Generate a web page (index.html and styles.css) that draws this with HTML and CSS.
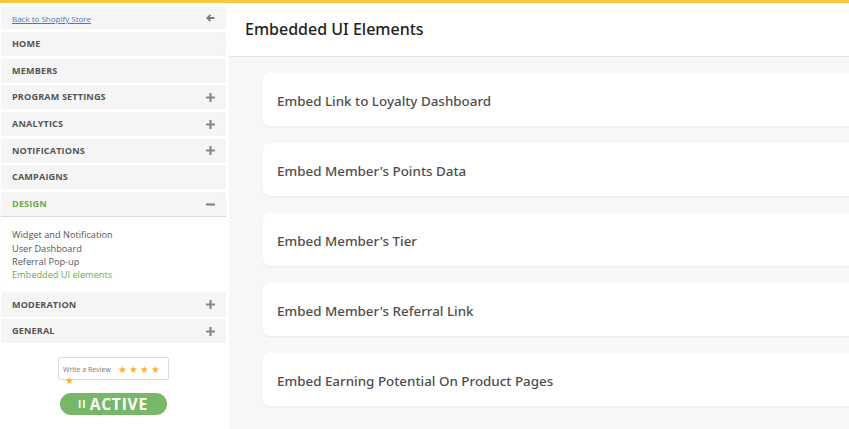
FILE: index.html
```html
<!DOCTYPE html>
<html>
<head>
<meta charset="utf-8">
<link rel="stylesheet" href="styles.css">
</head>
<body>
<div class="topbar"></div>
<div class="app">
  <aside class="sidebar">
    <div class="nav-item back">
      <a href="#" class="back-link">Back to Shopify Store</a>
      <svg class="ico" width="9" height="8" viewBox="0 0 9 8"><path d="M4.5 0.8 L1.3 4 L4.5 7.2 M1.5 4 H8.5" stroke="#7a7a7a" stroke-width="1.8" fill="none"/></svg>
    </div>
    <div class="nav-item"><span>HOME</span></div>
    <div class="nav-item"><span>MEMBERS</span></div>
    <div class="nav-item"><span>PROGRAM SETTINGS</span><svg class="ico" width="9" height="9" viewBox="0 0 9 9"><path d="M4.5 0 V9 M0 4.5 H9" stroke="#888" stroke-width="2.2"/></svg></div>
    <div class="nav-item"><span>ANALYTICS</span><svg class="ico" width="9" height="9" viewBox="0 0 9 9"><path d="M4.5 0 V9 M0 4.5 H9" stroke="#888" stroke-width="2.2"/></svg></div>
    <div class="nav-item"><span>NOTIFICATIONS</span><svg class="ico" width="9" height="9" viewBox="0 0 9 9"><path d="M4.5 0 V9 M0 4.5 H9" stroke="#888" stroke-width="2.2"/></svg></div>
    <div class="nav-item"><span>CAMPAIGNS</span></div>
    <div class="nav-group">
      <div class="nav-item active"><span>DESIGN</span><svg class="ico" width="9" height="9" viewBox="0 0 9 9"><path d="M0 4.5 H9" stroke="#888" stroke-width="2.2"/></svg></div>
      <ul class="submenu">
        <li>Widget and Notification</li>
        <li>User Dashboard</li>
        <li>Referral Pop-up</li>
        <li class="current">Embedded UI elements</li>
      </ul>
    </div>
    <div class="nav-item"><span>MODERATION</span><svg class="ico" width="9" height="9" viewBox="0 0 9 9"><path d="M4.5 0 V9 M0 4.5 H9" stroke="#888" stroke-width="2.2"/></svg></div>
    <div class="nav-item"><span>GENERAL</span><svg class="ico" width="9" height="9" viewBox="0 0 9 9"><path d="M4.5 0 V9 M0 4.5 H9" stroke="#888" stroke-width="2.2"/></svg></div>
    <div class="extras">
      <div class="review">
        <span class="review-text">Write a Review</span>
        <span class="stars">★ ★ ★ ★ <span class="wrap-star">★</span></span>
      </div>
      <div class="status"><span class="pause">II</span> ACTIVE</div>
    </div>
  </aside>
  <main class="main">
    <header class="page-header"><h1>Embedded UI Elements</h1></header>
    <section class="content">
      <div class="card">Embed Link to Loyalty Dashboard</div>
      <div class="card">Embed Member's Points Data</div>
      <div class="card">Embed Member's Tier</div>
      <div class="card">Embed Member's Referral Link</div>
      <div class="card">Embed Earning Potential On Product Pages</div>
    </section>
  </main>
</div>
</body>
</html>
```

FILE: styles.css
```css
* { box-sizing: border-box; }
html, body { margin: 0; padding: 0; }
body {
  width: 849px;
  height: 429px;
  overflow: hidden;
  background: #fff;
  font-family: "Open Sans", "Noto Sans", sans-serif;
}
.topbar { height: 3px; background: #fcc73a; }
.app { display: flex; height: 426px; }
.sidebar {
  width: 229px;
  flex: none;
  padding: 4px 3px 0 1px;
  background: #fff;
}
.nav-item {
  height: 24px;
  margin-bottom: 2.7px;
  background: #f5f5f5;
  border-radius: 3px;
  display: flex;
  align-items: center;
  justify-content: space-between;
  padding: 0 11px 0 11px;
  font-size: 9.1px;
  font-weight: 700;
  color: #555;
  letter-spacing: 0.15px;
  box-shadow: 0 0 1px rgba(0,0,0,0.06);
}
.nav-item > span { padding-bottom: 1px; }
.nav-item.back { height: 22px; margin-bottom: 3px; }
.back-link {
  font-size: 8px;
  font-weight: 400;
  color: #3d7dc4;
  text-decoration: underline;
  letter-spacing: 0;
}
.ico { display: block; flex: none; }
.nav-item.active {
  color: #6aab4f;
  border-radius: 3px 3px 0 0;
  border-bottom: 1px solid #dcdcdc;
  height: 25px;
  margin-bottom: 0;
}
.nav-group { margin-bottom: 2px; box-shadow: 0 1px 2px rgba(0,0,0,0.06); border-radius: 3px; }
.submenu {
  list-style: none;
  margin: 0;
  padding: 11px 11px 9px;
  font-size: 9.2px;
  line-height: 13.4px;
  color: #555;
  background: #fff;
}
.submenu .current { color: #6aab4f; }
.extras {
  display: flex;
  flex-direction: column;
  align-items: center;
  padding-top: 11px;
}
.review {
  width: 111px;
  height: 23px;
  border: 1px solid #dcdcdc;
  border-radius: 2px;
  padding: 4px 4px 0;
  font-size: 7px;
  color: #777;
  position: relative;
  margin-left: 0;
}
.review-text { vertical-align: middle; }
.stars { color: #f7b41c; font-size: 10px; margin-left: 5px; letter-spacing: -0.3px; vertical-align: middle; }
.wrap-star { position: absolute; left: 6px; top: 15px; }
.status {
  margin-top: 13px;
  width: 107px;
  height: 22px;
  border-radius: 11px;
  background: #77b868;
  color: #fff;
  font-weight: 700;
  font-size: 15.5px;
  letter-spacing: 0.8px;
  display: flex;
  align-items: center;
  justify-content: center;
  gap: 3px;
  margin-left: -1px;
}
.pause { font-size: 10px; letter-spacing: 1px; }
.main {
  flex: 1;
  min-width: 0;
  background: #f7f7f7;
  overflow: hidden;
}
.page-header {
  height: 54px;
  background: #fff;
  border-bottom: 1px solid #dfe2e7;
  display: flex;
  align-items: center;
  padding-left: 16px;
}
.page-header h1 {
  margin: 0;
  font-family: "Noto Sans", "Open Sans", sans-serif;
  font-size: 16px;
  font-weight: 500;
  color: #222;
  padding-bottom: 2px;
}
.content {
  padding: 16px 0 0 34px;
  display: flex;
  flex-direction: column;
  gap: 17px;
}
.card {
  width: 700px;
  flex: none;
  height: 53px;
  background: #fff;
  border-radius: 7px;
  box-shadow: 0 1px 2px rgba(0,0,0,0.06);
  display: flex;
  align-items: center;
  padding: 2px 14px 0 14px;
  font-family: "Noto Sans", "Open Sans", sans-serif;
  font-size: 13.4px;
  font-weight: 500;
  color: #4e4e4e;
}
```
